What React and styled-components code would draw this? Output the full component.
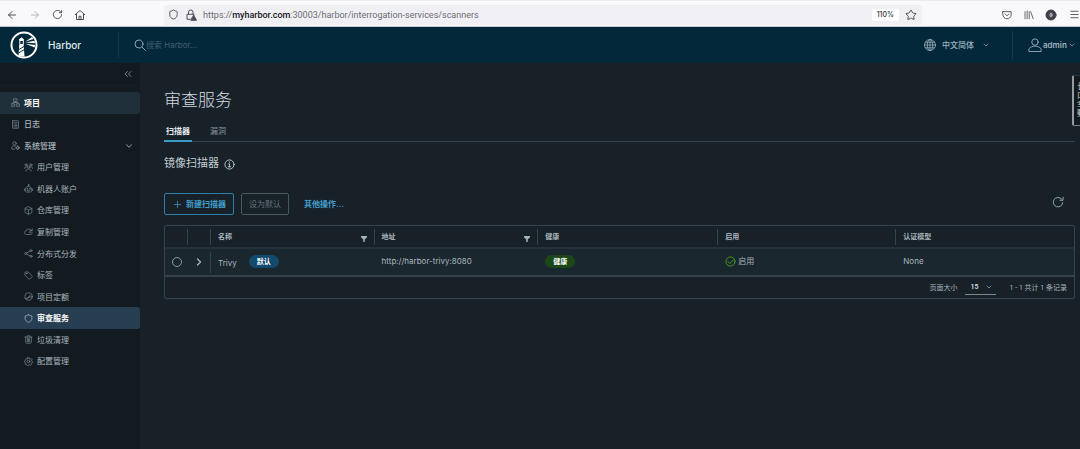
import React, { useState } from "react";
import styled, { createGlobalStyle, css } from "styled-components";
import {
  ArrowLeft,
  ArrowRight,
  RotateCw,
  Shield,
  Star,
  Menu,
  ChevronDown,
  ChevronRight,
  ChevronsLeft,
  Plus,
} from "lucide-react";

const GlobalStyle = createGlobalStyle`
  * {
    box-sizing: border-box;
  }
  body {
    margin: 0;
    overflow-x: hidden;
    background: #172127;
    color: #a9b6be;
    font-family: Inter, "Noto Sans CJK SC", sans-serif;
    font-size: 8px;
    line-height: 12px;
  }
  button, input, select {
    font: inherit;
    color: inherit;
    background: none;
    border: 0;
    margin: 0;
    padding: 0;
  }
  button {
    cursor: pointer;
  }
  a {
    color: inherit;
    text-decoration: none;
  }
  svg {
    display: block;
    flex-shrink: 0;
  }
`;

const Page = styled.div`
  min-height: 100vh;
  display: flex;
  flex-direction: column;
`;

/* browser chrome */
const BrowserBar = styled.div`
  display: flex;
  align-items: center;
  height: 27px;
  padding: 2px 0 0 6px;
  background: #f9f9fb;
  border-top: 1px solid #eaeaef;
  border-bottom: 1px solid #c4c8ce;
  color: #4b4b55;
`;
const NavButtons = styled.div`
  display: flex;
  gap: 11px;
  width: 158px;
`;
const IconButton = styled.button`
  display: flex;
  align-items: center;
  justify-content: center;
  color: ${props => props.$color || "inherit"};
`;
const UrlBox = styled.div`
  flex: 1;
  display: flex;
  align-items: center;
  gap: 6px;
  height: 20px;
  padding: 0 5px 0 4px;
  background: #f0f0f4;
  border-radius: 2px;
`;
const Url = styled.div`
  flex: 1;
  font-family: Roboto, sans-serif;
  font-size: 9px;
  color: #6c6c75;
  b {
    font-weight: 500;
    color: #17171d;
  }
`;
const Zoom = styled.span`
  padding: 0 5px;
  background: #fff;
  border-radius: 2px;
  font-size: 7px;
  font-weight: 500;
  color: #34343c;
`;
const BrowserTools = styled.div`
  display: flex;
  align-items: center;
  justify-content: space-between;
  width: 158px;
  padding: 0 0 0 80px;
`;

/* harbor header */
const Header = styled.header`
  display: flex;
  align-items: center;
  height: 36px;
  padding-left: 10px;
  background: #03283a;
  color: #9db3bf;
`;
const Brand = styled.a`
  display: flex;
  align-items: center;
  gap: 10px;
  width: 108px;
  font-size: 10px;
  font-weight: 500;
  color: #dfe8ec;
`;
const SearchBox = styled.label`
  flex: 1;
  display: flex;
  align-items: center;
  height: 26px;
  padding-left: 15px;
  border-left: 1px solid #14384a;
  input {
    flex: 1;
    outline: none;
    color: #c9d6dd;
  }
  input::placeholder {
    color: #446172;
    opacity: 1;
  }
`;
const LangButton = styled.button`
  display: flex;
  align-items: center;
  gap: 6px;
  width: 88px;
  height: 28px;
  font-weight: 500;
  svg:last-child {
    margin-left: 2px;
  }
`;
const UserButton = styled.button`
  display: flex;
  align-items: center;
  gap: 1px;
  height: 28px;
  width: 68px;
  padding-left: 15px;
  border-left: 1px solid #163a4d;
  font-weight: 600;
`;

/* sidebar */
const Body = styled.div`
  flex: 1;
  display: flex;
`;
const Sidebar = styled.nav`
  width: 140px;
  flex-shrink: 0;
  background: #131b21;
`;
const CollapseRow = styled.div`
  display: flex;
  justify-content: flex-end;
  align-items: center;
  height: 23px;
  margin-bottom: 6px;
  padding-right: 6px;
  border-bottom: 1px solid #161f25;
  color: #72808a;
`;
const NavList = styled.ul`
  display: grid;
  grid-auto-rows: 1fr;
  height: 280px;
  margin: 0;
  padding: 0;
  list-style: none;
`;
const NavLink = styled.a`
  display: flex;
  align-items: center;
  gap: 4px;
  height: 100%;
  padding: 0 6px 0 ${props => (props.$sub ? 24 : 11)}px;
  border-radius: 0 3px 3px 0;
  font-weight: ${props => (props.$sub ? 400 : 500)};
  span {
    flex: 1;
  }
  svg {
    color: #7f8c95;
  }
  ${props =>
    props.$open &&
    css`
      background: #1f303b;
      color: #fff;
      font-weight: 700;
    `}
  ${props =>
    props.$current &&
    css`
      background: #273e52;
      color: #fff;
      font-weight: 700;
      svg {
        color: #b5c5d0;
      }
    `}
`;

/* content */
const Content = styled.main`
  flex: 1;
  min-width: 0;
  padding: 25px 5px 24px 24px;
`;
const Title = styled.h2`
  margin: 0;
  font-size: 17px;
  line-height: 24px;
  font-weight: 300;
  color: #d3dce1;
`;
const Tabs = styled.div`
  display: flex;
  gap: 16px;
  height: 22px;
  margin-top: 8px;
  border-bottom: 1px solid #35424c;
`;
const Tab = styled.button`
  height: 22px;
  padding: 1px 2px 0;
  border-bottom: 2px solid ${props => (props.$active ? "#3d9bcb" : "transparent")};
  color: ${props => (props.$active ? "#e6edf1" : "#83919b")};
  font-weight: ${props => (props.$active ? 700 : 400)};
`;
const SubTitle = styled.h4`
  display: flex;
  align-items: center;
  gap: 5px;
  margin: 13px 0 0;
  font-size: 11px;
  line-height: 16px;
  font-weight: 400;
  color: #c3ced4;
  svg {
    margin-top: 3px;
  }
`;
const ActionBar = styled.div`
  display: flex;
  align-items: center;
  gap: 7px;
  margin: 22px 0 10px;
`;
const Button = styled.button`
  display: flex;
  align-items: center;
  gap: 3px;
  height: 22px;
  padding: 0 7px;
  border: 1px solid ${props => (props.$muted ? "#4b565d" : "#2f7ea8")};
  border-radius: 2px;
  color: ${props => (props.$muted ? "#67737b" : "#429fcd")};
  font-weight: ${props => (props.$muted ? 400 : 700)};
  ${props =>
    props.$link &&
    css`
      border-color: transparent;
    `}
`;
const Refresh = styled(IconButton)`
  margin: 0 11px 4px auto;
`;

/* datagrid */
const Grid = styled.div`
  border: 1px solid #36444e;
  border-radius: 2px;
`;
const Table = styled.table`
  width: 100%;
  table-layout: fixed;
  border-collapse: collapse;
  text-align: left;
`;
const Col = styled.col`
  width: ${props => props.$w};
`;
const Th = styled.th`
  height: 22px;
  padding: 0;
  border-bottom: 2px solid #25313a;
  font-size: 7px;
  font-weight: 600;
`;
const HeadCell = styled.div`
  display: flex;
  align-items: center;
  justify-content: space-between;
  height: 16px;
  padding: 0 7px;
  border-left: 1px solid ${props => (props.$first ? "transparent" : "#34424c")};
  svg {
    margin-top: 4px;
  }
`;
const Row = styled.tr`
  background: #1b272f;
`;
const Td = styled.td`
  height: 28px;
  padding: 0;
  border-bottom: 2px solid #33414b;
`;
const Cell = styled.div`
  display: flex;
  align-items: center;
  justify-content: ${props => (props.$center ? "center" : "flex-start")};
  gap: ${props => props.$gap || 0}px;
  height: 21px;
  padding: ${props => (props.$center ? "0" : "0 0 2px 7px")};
  border-left: 1px solid ${props => (props.$line ? "#34424c" : "transparent")};
`;
const Radio = styled.input`
  && {
    appearance: none;
    width: 10px;
    height: 10px;
    border: 1px solid #8a979f;
    border-radius: 50%;
  }
  &&:checked {
    box-shadow: inset 0 0 0 2px #1b272f;
    background: #429fcd;
  }
`;
const Name = styled.span`
  padding-top: 4px;
`;
const Badge = styled.span`
  padding: 0 8px;
  border-radius: 7px;
  background: ${props => props.$bg};
  color: #fff;
  font-size: 7px;
  line-height: 13px;
  font-weight: 700;
`;
const Footer = styled.div`
  display: flex;
  justify-content: flex-end;
  align-items: center;
  height: 21px;
  padding-right: 7px;
  font-family: Roboto, "Noto Sans CJK SC", sans-serif;
  font-size: 7px;
`;
const PageSize = styled.label`
  display: flex;
  align-items: center;
  gap: 7px;
  margin-right: 14px;
`;
const SelectBox = styled.span`
  display: grid;
  align-items: center;
  border-bottom: 1px solid #7b8991;
  select,
  svg {
    grid-area: 1 / 1;
  }
  select {
    appearance: none;
    width: 31px;
    height: 14px;
    padding-left: 6px;
    font-weight: 600;
    color: #d3dce1;
  }
  svg {
    justify-self: end;
    margin-right: 3px;
    pointer-events: none;
  }
`;

/* tray that peeks in from the window edge */
const SideTray = styled.aside`
  position: fixed;
  top: 75px;
  right: -14px;
  width: 22px;
  height: 51px;
  padding: 6px 3px;
  background: #121a1f;
  border: 1px solid #7c8488;
  border-top-color: #2a353c;
  border-left: 2px solid #969c9f;
  border-radius: 2px;
  color: #c0cbd1;
  font-size: 8px;
  line-height: 9px;
  span {
    display: block;
  }
`;

function Glyph({ size = 10, stroke = 1.5, children }) {
  return (
    <svg
      width={size}
      height={size}
      viewBox="0 0 24 24"
      fill="none"
      stroke="currentColor"
      strokeWidth={stroke}
      strokeLinecap="round"
      strokeLinejoin="round"
      aria-hidden="true"
    >
      {children}
    </svg>
  );
}

const icons = {
  project: (
    <>
      <rect x="8" y="2" width="8" height="7" />
      <rect x="1.500" y="15.500" width="7.500" height="6.500" />
      <rect x="15" y="15.500" width="7.500" height="6.500" />
      <path d="M12 9v3M5 15.500V12h14v3.500" />
    </>
  ),
  log: (
    <>
      <rect x="4" y="2" width="16" height="20" rx="1" />
      <path d="M8 7h1M12 7h4M8 11h1M12 11h4M8 15h1M12 15h4M8 18.500h1M12 18.500h4" />
    </>
  ),
  admin: (
    <>
      <circle cx="9.500" cy="6.500" r="4.500" />
      <path d="M10 21.500H2V17c2-3.500 6-4.500 10-3.500" />
      <circle cx="18" cy="18" r="3.600" strokeWidth="2.500" />
      <path d="M18 12.500v2M18 21.500v2M12.500 18h2M21.500 18h2" />
    </>
  ),
  users: (
    <>
      <circle cx="12" cy="11" r="3.200" />
      <path d="M5.500 22v-2.500c1.500-3 4-3.500 6.500-3.500s5 .5 6.500 3.500V22" />
      <circle cx="5.500" cy="5" r="2.800" />
      <circle cx="18.500" cy="5" r="2.800" />
      <path d="M1 14.500V13c1-2.200 3.500-3 6-2.500M23 14.500V13c-1-2.200-3.500-3-6-2.500" />
    </>
  ),
  robot: (
    <>
      <path d="M12 6.500V3M4 14c0-5 3.500-7.500 8-7.500s8 2.500 8 7.500v4c0 2-1 3.500-3 3.500H7c-2 0-3-1.500-3-3.500zM1.500 13v4.500M22.500 13v4.500M9 18h6" />
      <circle cx="12" cy="2.500" r="1" />
      <circle cx="8.500" cy="13" r="1" />
      <circle cx="15.500" cy="13" r="1" />
    </>
  ),
  box: <path d="M12 2l9 4.500v11L12 22l-9-4.500v-11zM3 6.500l9 4.500 9-4.500M12 11v11" />,
  cloud: (
    <>
      <path d="M15 6.500C9.500 3 6 7 6 10.500c-3 0-5 2-5 4.500s2 5 5 5h11c3.500 0 5.500-3 4.500-6" />
      <path d="M14 14h4V7.500M15.500 10L18 7.500l3 2.500M22 5v4" />
    </>
  ),
  share: (
    <>
      <circle cx="4.500" cy="12" r="2.800" />
      <circle cx="18.500" cy="4.500" r="2.800" />
      <circle cx="18.500" cy="19.500" r="2.800" />
      <path d="M7 10.700l9-5M7 13.300l9 5" />
    </>
  ),
  tag: (
    <>
      <path d="M2.500 4.500c0-1 .8-2 2-2H11L21.500 13c.7.700.7 1.600 0 2.300l-6.200 6.200c-.7.700-1.600.7-2.300 0L2.500 11z" />
      <circle cx="7" cy="7" r="1.200" />
    </>
  ),
  quota: (
    <>
      <circle cx="12" cy="12" r="10" />
      <path d="M3 16.500h7.500L17 8M10.500 16.500c0-2 1-3 2.500-3H21" />
    </>
  ),
  shield: <path d="M12 2c3 2 6 3 9 3v7c0 5-4 8-9 10.500C7 20 3 17 3 12V5c3 0 6-1 9-3z" />,
  trash: (
    <path d="M2.500 5.500h19M8.500 5.500V2h7v3.500M4.500 5.500V20c0 1 1 2 2 2h11c1 0 2-1 2-2V5.500M9 9.500v8.500M12 9.500v8.500M15 9.500v8.500" />
  ),
  cog: (
    <>
      <circle cx="12" cy="12" r="3.500" />
      <path d="M10 2h4l.7 3 1.800.8L19 4.200 21.500 7 20 9.500l.5 1.500 2 1v3l-2.500.8-1 1.700.7 2.500-2.700 2-2.500-1.500-1.500.5-1 2h-3l-1-2.500-1.500-.7L5 21l-2.500-2.500L4 16l-.5-1.500-2-1v-3L4 9.500l.8-1.500L4 5.500 6.500 3.500 9 5z" />
    </>
  ),
};

const navItems = [
  { icon: "project", text: "项目", open: true },
  { icon: "log", text: "日志" },
  { icon: "admin", text: "系统管理", group: true },
  { icon: "users", text: "用户管理", sub: true },
  { icon: "robot", text: "机器人账户", sub: true },
  { icon: "box", text: "仓库管理", sub: true },
  { icon: "cloud", text: "复制管理", sub: true },
  { icon: "share", text: "分布式分发", sub: true },
  { icon: "tag", text: "标签", sub: true },
  { icon: "quota", text: "项目定额", sub: true },
  { icon: "shield", text: "审查服务", sub: true, current: true },
  { icon: "trash", text: "垃圾清理", sub: true },
  { icon: "cog", text: "配置管理", sub: true },
];

function Logo() {
  return (
    <svg width="28" height="28" viewBox="0 0 28 28" aria-hidden="true">
      <circle cx="14" cy="14" r="12.500" fill="none" stroke="#fff" strokeWidth="2" />
      <path d="M9 8.500l2.500-2.200L14 8.500v1H9zM9.300 13.500h4.400l.8 12-3.500.1-2.500-1.200z" fill="#fff" />
      <path d="M9.800 9.500h3.500v4H9.800z" fill="none" stroke="#fff" />
      <path d="M9 18.500l5-3M8.800 21.800l5.400-3.200" stroke="#03283a" strokeWidth="1" />
      <path d="M15.500 10.500L22 6l1.500 2zM15.500 11.500l9-1.700.6 2.500zM15.500 12.800l9.600 1.200-.4 2.500z" fill="#fff" />
    </svg>
  );
}

function Browser() {
  return (
    <BrowserBar>
      <NavButtons>
        <IconButton aria-label="back"><ArrowLeft size={12} strokeWidth={2} /></IconButton>
        <IconButton aria-label="forward" $color="#b4b4bb"><ArrowRight size={12} strokeWidth={2} /></IconButton>
        <IconButton aria-label="reload"><RotateCw size={11} strokeWidth={2} /></IconButton>
        <IconButton aria-label="home">
          <Glyph size={12} stroke={2}>
            <path d="M2.500 11.500L12 3l9.500 8.500M5 10v11h14V10M10 21v-6.500h4V21" />
          </Glyph>
        </IconButton>
      </NavButtons>
      <UrlBox>
        <Shield size={11} strokeWidth={2} />
        <Glyph size={12} stroke={2}>
          <path d="M7 10V6.500a4.500 4.500 0 019 0V10M10 20.500H4V10.500h14v2" />
          <path d="M17.500 13l5.500 9.500H12z" fill="currentColor" />
        </Glyph>
        <Url>
          https://<b>myharbor.com</b>:30003/harbor/interrogation-services/scanners
        </Url>
        <Zoom>110%</Zoom>
        <IconButton aria-label="bookmark"><Star size={12} strokeWidth={2} /></IconButton>
      </UrlBox>
      <BrowserTools>
        <IconButton aria-label="pocket">
          <Glyph size={10} stroke={2.2}>
            <path d="M2 4h20v7c0 6-4.500 10-10 10S2 17 2 11zM7.500 9.500L12 14l4.500-4.500" />
          </Glyph>
        </IconButton>
        <IconButton aria-label="library">
          <Glyph size={10} stroke={2}>
            <path d="M2.500 4v17M7.500 2v19M12.500 4v17M16 4l6 17" />
          </Glyph>
        </IconButton>
        <IconButton aria-label="account">
          <Glyph size={12} stroke={2}>
            <circle cx="12" cy="12" r="10" fill="#3f3f48" stroke="#3f3f48" />
            <ellipse cx="12" cy="12" rx="2" ry="4" stroke="#c9c9cf" />
          </Glyph>
        </IconButton>
        <IconButton aria-label="menu"><Menu size={11} strokeWidth={2} /></IconButton>
      </BrowserTools>
    </BrowserBar>
  );
}

function FilterIcon() {
  return (
    <svg width="6" height="6" viewBox="0 0 12 12" fill="#a5b0b7" aria-hidden="true">
      <path d="M0 0h12v2.500L7.500 7v5h-3V7L0 2.500z" />
    </svg>
  );
}

function Scanners() {
  const [picked, setPicked] = useState(false);

  return (
    <Grid>
      <Table>
        <colgroup>
          <Col $w="22px" />
          <Col $w="23px" />
          <Col $w="18%" />
          <Col $w="18%" />
          <Col $w="19.8%" />
          <Col $w="19.6%" />
          <Col />
        </colgroup>
        <thead>
          <tr>
            <Th><HeadCell $first /></Th>
            <Th><HeadCell /></Th>
            <Th><HeadCell>名称<FilterIcon /></HeadCell></Th>
            <Th><HeadCell>地址<FilterIcon /></HeadCell></Th>
            <Th><HeadCell>健康</HeadCell></Th>
            <Th><HeadCell>启用</HeadCell></Th>
            <Th><HeadCell>认证模型</HeadCell></Th>
          </tr>
        </thead>
        <tbody>
          <Row>
            <Td>
              <Cell $center>
                <Radio type="radio" aria-label="Trivy" checked={picked} onChange={() => setPicked(true)} />
              </Cell>
            </Td>
            <Td>
              <Cell $center>
                <IconButton aria-label="expand"><ChevronRight size={12} strokeWidth={2.5} /></IconButton>
              </Cell>
            </Td>
            <Td>
              <Cell $line $gap={12}>
                <Name>Trivy</Name>
                <Badge $bg="#114a6e">默认</Badge>
              </Cell>
            </Td>
            <Td><Cell>http://harbor-trivy:8080</Cell></Td>
            <Td><Cell><Badge $bg="#1b4719">健康</Badge></Cell></Td>
            <Td>
              <Cell $gap={2}>
                <IconButton as="span" $color="#4a9a1c">
                  <Glyph size={11} stroke={2}>
                    <circle cx="12" cy="12" r="10" />
                    <path d="M6.500 12.500l4 4 7.500-8" />
                  </Glyph>
                </IconButton>
                启用
              </Cell>
            </Td>
            <Td><Cell>None</Cell></Td>
          </Row>
        </tbody>
      </Table>
      <Footer>
        <PageSize>
          页面大小
          <SelectBox>
            <select defaultValue="15">
              <option>15</option>
              <option>25</option>
              <option>50</option>
            </select>
            <ChevronDown size={8} strokeWidth={2} />
          </SelectBox>
        </PageSize>
        1 - 1 共计 1 条记录
      </Footer>
    </Grid>
  );
}

export default function App() {
  const [tab, setTab] = useState("扫描器");

  return (
    <Page>
      <GlobalStyle />
      <Browser />
      <Header>
        <Brand href="#"><Logo />Harbor</Brand>
        <SearchBox>
          <Glyph size={12} stroke={1.8}>
            <circle cx="10" cy="10" r="8" />
            <path d="M16 16l7 7" />
          </Glyph>
          <input placeholder="搜索 Harbor..." aria-label="搜索" />
        </SearchBox>
        <LangButton>
          <Glyph size={12}>
            <circle cx="12" cy="12" r="11" />
            <ellipse cx="12" cy="12" rx="5.500" ry="11" />
            <path d="M12 1v22M1 12h22M3 6.500h18M3 17.500h18" />
          </Glyph>
          中文简体
          <ChevronDown size={8} strokeWidth={2} />
        </LangButton>
        <UserButton>
          <Glyph size={14}>
            <circle cx="12" cy="7" r="5.500" />
            <path d="M1.500 22.500v-4C4 15.500 8 14 12 14s8 1.500 10.500 4.500v4z" />
          </Glyph>
          admin
          <ChevronDown size={8} strokeWidth={2} />
        </UserButton>
      </Header>
      <Body>
        <Sidebar>
          <CollapseRow>
            <IconButton aria-label="collapse"><ChevronsLeft size={12} strokeWidth={2} /></IconButton>
          </CollapseRow>
          <NavList>
            {navItems.map(item => (
              <li key={item.text}>
                <NavLink href="#" $sub={item.sub} $open={item.open} $current={item.current}>
                  <Glyph size={9} stroke={1.8}>{icons[item.icon]}</Glyph>
                  <span>{item.text}</span>
                  {item.group && <ChevronDown size={10} strokeWidth={2.5} />}
                </NavLink>
              </li>
            ))}
          </NavList>
        </Sidebar>
        <Content>
          <Title>审查服务</Title>
          <Tabs>
            {["扫描器", "漏洞"].map(name => (
              <Tab key={name} $active={tab === name} onClick={() => setTab(name)}>
                {name}
              </Tab>
            ))}
          </Tabs>
          <SubTitle>
            镜像扫描器
            <Glyph size={11} stroke={2}>
              <circle cx="12" cy="12" r="10" />
              <path d="M12 6.500v.5M10 10.500h2V17M9.500 17h5" />
            </Glyph>
          </SubTitle>
          <ActionBar>
            <Button><Plus size={11} strokeWidth={1.5} />新建扫描器</Button>
            <Button $muted>设为默认</Button>
            <Button $link>其他操作…</Button>
            <Refresh aria-label="refresh">
              <Glyph size={12} stroke={1.8}>
                <path d="M21.500 13.500A9.500 9.500 0 1119 5.800M22 2.500v6h-6" />
              </Glyph>
            </Refresh>
          </ActionBar>
          <Scanners />
        </Content>
      </Body>
      <SideTray>
        <span>长</span>
        <span>口</span>
        <span>幸</span>
        <span>動</span>
      </SideTray>
    </Page>
  );
}
